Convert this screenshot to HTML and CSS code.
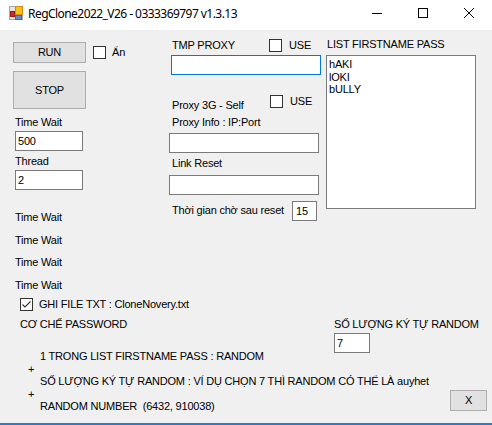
FILE: index.html
```html
<!DOCTYPE html>
<html>
<head>
<meta charset="utf-8">
<link rel="stylesheet" href="styles.css">
</head>
<body>
<div class="window">
  <div class="titlebar">
    <svg class="app-icon" viewBox="0 0 16 16">
      <rect x="0.5" y="0.5" width="13" height="13" fill="#e4e4e4" stroke="#a8a8a8"/>
      <rect x="6.5" y="0.5" width="7" height="8" fill="#f6c21a" stroke="#d88a10"/>
      <rect x="1.5" y="5.5" width="4" height="5" fill="#d42a20" stroke="#9a1a14"/>
      <rect x="6.5" y="9.5" width="6" height="4" fill="#5a8ad8" stroke="#3a68b8"/>
    </svg>
    <span class="title">RegClone2022_V26 - 0333369797 v1.3.13</span>
    <div class="controls">
      <span class="ctl"><svg viewBox="0 0 10 10"><line x1="0" y1="5.5" x2="10" y2="5.5" stroke="#000" stroke-width="1"/></svg></span>
      <span class="ctl"><svg viewBox="0 0 10 10"><rect x="0.5" y="0.5" width="9" height="9" fill="none" stroke="#000" stroke-width="1"/></svg></span>
      <span class="ctl"><svg viewBox="0 0 10 10"><path d="M0 0 L10 10 M10 0 L0 10" stroke="#000" stroke-width="1"/></svg></span>
    </div>
  </div>

  <div class="form">
    <div class="top">
      <div class="col-left">
        <div class="run-row">
          <button class="btn run">RUN</button>
          <label class="chk chk-an"><span class="box"></span>Ẩn</label>
        </div>
        <button class="btn stop">STOP</button>
        <div class="lbl lbl-tw">Time Wait</div>
        <div class="tb tb-left">500</div>
        <div class="lbl lbl-thread">Thread</div>
        <div class="tb tb-left">2</div>
        <div class="tw first">Time Wait</div>
        <div class="tw">Time Wait</div>
        <div class="tw">Time Wait</div>
        <div class="tw">Time Wait</div>
      </div>

      <div class="col-mid">
        <div class="row-use row-tmp">
          <span class="use-label w97">TMP PROXY</span>
          <label class="chk"><span class="box"></span>USE</label>
        </div>
        <div class="tb tb-wide tb-focus"></div>
        <div class="row-use row-3g">
          <span class="use-label w98 lower">Proxy 3G - Self</span>
          <label class="chk"><span class="box"></span>USE</label>
        </div>
        <div class="lbl mid-lbl lbl-info">Proxy Info : IP:Port</div>
        <div class="tb tb-wide tb-plain"></div>
        <div class="lbl mid-lbl lbl-link">Link Reset</div>
        <div class="tb tb-wide tb-plain"></div>
        <div class="row-reset">
          <span class="reset-label">Thời gian chờ sau reset</span>
          <div class="tb tb-small">15</div>
        </div>
      </div>

      <div class="col-right">
        <div class="lbl list-lbl">LIST FIRSTNAME PASS</div>
        <div class="textarea">
          <div>hAKI</div>
          <div>lOKI</div>
          <div>bULLY</div>
        </div>
      </div>
    </div>

    <div class="bottom">
      <label class="chk ghi"><span class="box checked"><svg viewBox="0 0 11 11"><polyline points="1.5,5.5 4,8 9.5,2.5" fill="none" stroke="#333" stroke-width="1.1"/></svg></span>GHI FILE TXT : CloneNovery.txt</label>
      <div class="pw">
        <div class="pw-left">
          <div class="lbl">CƠ CHẾ PASSWORD</div>
          <div class="rules">
            <div class="rule">1 TRONG LIST FIRSTNAME PASS : RANDOM</div>
            <div class="plus">+</div>
            <div class="rule">SỐ LƯỢNG KÝ TỰ RANDOM : VÍ DỤ CHỌN 7 THÌ RANDOM CÓ THỂ LÀ auyhet</div>
            <div class="plus">+</div>
            <div class="rule">RANDOM NUMBER  (6432, 910038)</div>
          </div>
        </div>
        <div class="pw-right">
          <div class="lbl">SỐ LƯỢNG KÝ TỰ RANDOM</div>
          <div class="tb tb-seven">7</div>
          <button class="btn btn-x">X</button>
        </div>
      </div>
    </div>
  </div>

  <div class="taskline"></div>
</div>
</body>
</html>
```

FILE: styles.css
```css
* { box-sizing: border-box; }
html, body { margin: 0; padding: 0; }
body {
  width: 492px;
  height: 425px;
  overflow: hidden;
  background: #f0f0f0;
  font-family: "Liberation Sans", Arial, sans-serif;
  font-size: 11px;
  line-height: 13px;
  letter-spacing: -0.2px;
  color: #000;
}
.window { height: 425px; display: flex; flex-direction: column; }

/* title bar */
.titlebar { height: 30px; flex: none; background: #fff; display: flex; align-items: flex-start; }
.app-icon { width: 16px; height: 16px; margin: 6px 0 0 9px; flex: none; }
.title {
  font-family: "Noto Sans", "Open Sans", sans-serif;
  font-size: 12px;
  line-height: 16px;
  letter-spacing: -0.55px;
  margin: 6px 0 0 3px;
  white-space: nowrap;
}
.controls { margin-left: auto; display: flex; }
.ctl { width: 46px; height: 30px; display: flex; justify-content: center; padding-top: 8px; }
.ctl svg { width: 10px; height: 10px; display: block; }

/* form */
.form { flex: 1; }
.top { display: flex; align-items: flex-start; }

.btn {
  font: inherit;
  letter-spacing: inherit;
  color: #000;
  background: #e1e1e1;
  border: 1px solid #adadad;
  padding: 0;
  margin: 0;
  display: block;
}
.tb {
  background: #fff;
  border: 1px solid #7a7a7a;
  height: 20px;
  padding: 2px 2px 0 2px;
  line-height: 14px;
  white-space: nowrap;
}

.chk { display: flex; align-items: center; white-space: nowrap; }
.box {
  width: 13px;
  height: 13px;
  border: 1px solid #333;
  background: #fff;
  flex: none;
  margin-right: 7px;
}
.box svg { width: 11px; height: 11px; display: block; }

/* left column */
.col-left { width: 169px; padding-left: 13px; flex: none; }
.run-row { display: flex; align-items: center; margin-top: 12px; }
.run { width: 73px; height: 21px; }
.chk-an { margin-left: 7px; }
.chk-an .box { margin-right: 6px; }
.stop { width: 73px; height: 38px; margin-top: 8px; }
.lbl { white-space: nowrap; }
.lbl-tw { margin: 7px 0 0 2px; }
.tb-left { width: 68px; margin: 2px 0 0 2px; }
.lbl-thread { margin: 4px 0 0 2px; }
.tw { margin: 9.6px 0 0 2px; }
.tw.first { margin-top: 21.3px; }

/* middle column */
.col-mid { width: 157px; flex: none; }
.row-use { display: flex; align-items: flex-start; }
.row-tmp { margin-top: 9px; }
.use-label { padding-left: 3px; flex: none; }
.w97 { width: 100px; }
.w98 { width: 101px; }
.lower { margin-top: 3.5px; }
.row-3g { margin-top: 20px; }
.tb-wide { width: 150px; }
.tb-focus { border-color: #0078d7; margin: 3px 0 0 2px; }
.tb-plain { margin-top: 4.5px; }
.mid-lbl { padding-left: 3px; }
.lbl-info { margin-top: 4px; }
.lbl-link { margin-top: 4px; }
.row-reset { display: flex; align-items: center; margin-top: 6px; }
.reset-label { width: 123px; padding-left: 3px; flex: none; white-space: nowrap; }
.tb-small { width: 25px; padding-left: 3px; }

/* right column */
.col-right { width: 166px; flex: none; }
.list-lbl { margin-top: 8px; padding-left: 1px; }
.textarea {
  margin-top: 4px;
  width: 150px;
  height: 154px;
  background: #fff;
  border: 1px solid #7a7a7a;
  padding: 2px 2px;
  line-height: 12.5px;
}

/* bottom */
.bottom { margin-top: 6px; }
.ghi { padding-left: 20px; }
.ghi .box { margin-right: 6px; }
.pw { display: flex; align-items: flex-start; margin-top: 7px; }
.pw-left { width: 334px; padding-left: 20px; flex: none; }
.rules { margin-top: 19px; padding-left: 20px; }
.rule { line-height: 12.5px; height: 12.5px; white-space: pre; }
.plus { line-height: 12.5px; height: 12.5px; margin-left: -12px; }
.pw-right { flex: none; }
.tb-seven { width: 36px; margin-top: 2px; }
.btn-x { width: 37px; height: 21px; margin: 37px 0 0 116px; }

.taskline { height: 2px; flex: none; background: #2b79d0; }
```
